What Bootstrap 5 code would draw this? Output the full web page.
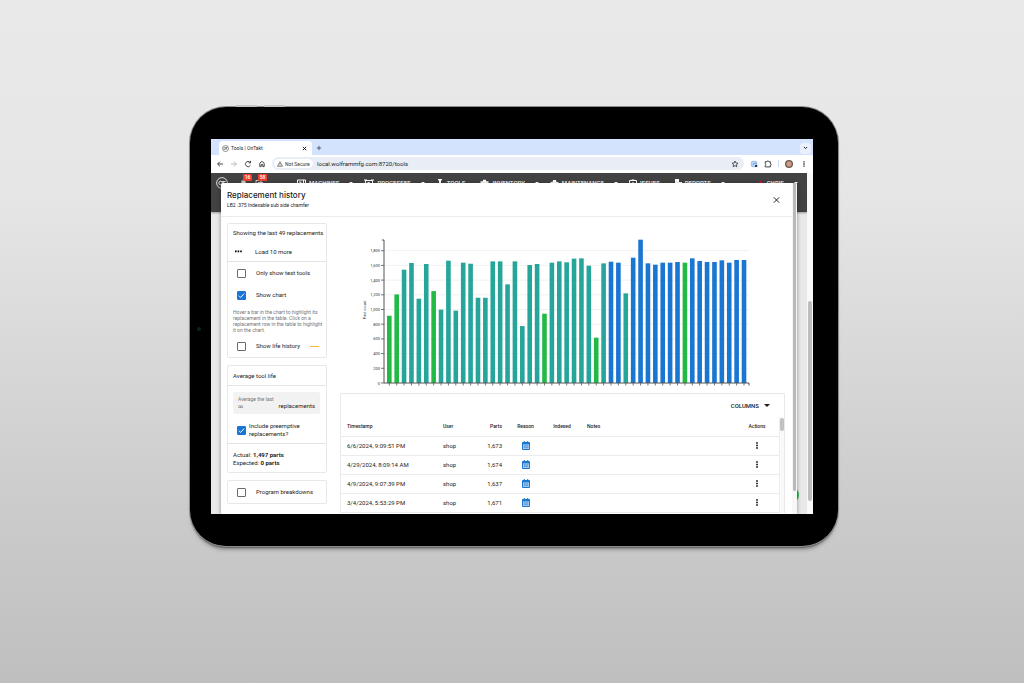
<!DOCTYPE html>
<html lang="en">
<head>
<meta charset="utf-8">
<meta name="viewport" content="width=device-width, initial-scale=1">
<title>Tools | OnTakt</title>
<link href="https://cdn.jsdelivr.net/npm/bootstrap@5.3.0/dist/css/bootstrap.min.css" rel="stylesheet">
<style>
  body { font-family: Roboto, "Liberation Sans", sans-serif; font-size: 6px; line-height: 8px; color: #1d1d1d;
    background: linear-gradient(#e9e9e9 0%, #e6e6e6 28%, #cbcbcb 75%, #bfbfbf 100%); }
  svg { display: block; flex: none; }
  button, .menu-link { font: inherit; color: inherit; background: none; border: 0; padding: 0; text-decoration: none; display: flex; align-items: center; }
  .stage { height: 100vh; padding: 107px 186px 137px 190px; }
  .tablet { min-height: 0; background: #000; border-radius: 36px; padding: 32px 25px 32px 21px; box-shadow: 0 0 0 1px #8c8c8c, 0 2px 1px 0 #666, 0 5px 4px -2px #777; }
  .top-key { top: -2px; width: 21px; height: 2px; background: #c4c4c4; }
  .key-a { left: 46px; } .key-b { left: 74px; }
  .lens { left: 7px; top: 50%; width: 4px; height: 4px; background: #06251c; }
  .display { background: #fff; }

  .tabstrip { height: 16px; background: #d3e3fd; padding: 2px 2px 0 8px; }
  .browser-tab { width: 93px; height: 14px; background: #fff; border-radius: 4px 4px 0 0; padding: 0 5px 0 3px; font-size: 5px; gap: 2px; }
  .tab-menu { width: 11px; height: 11px; background: #eaf1fe; border-radius: 3px; justify-content: center; }
  .toolbar { height: 18px; padding: 0 8px 1px 5px; gap: 6px; color: #333; }
  .omnibox { height: 13px; background: #e9edf6; border-radius: 7px; padding: 0 5px 0 2px; }
  .chip { height: 9px; background: #fff; border-radius: 5px; padding: 0 3px; font-size: 5px; gap: 2px; width: 39px; }
  .omnibox input { border: 0; background: none; outline: 0; padding: 0; height: 10px; color: #222; min-width: 0; }
  .avatar { width: 8px; height: 8px; background: radial-gradient(circle at 50% 50%, #d49a88 0 35%, #6a5a4a 60%, #5d6b4c 100%); }
  .sep { width: 1px; height: 7px; background: #c9dafb; }

  .app { min-height: 0; background: #e9e9e9; }
  .page-track { flex: none; width: 6px; background: #f9f9f9; padding: 128px 1px 0; }
  .page-thumb { height: 200px; background: #bdbdbd; border-radius: 2px; }
  .appbar { height: 39px; background: #424242; color: #fff; padding: 4px 9px 0 5px; font-weight: 500; box-shadow: 0 1px 2px #999; }
  .appbar-row { height: 12px; }
  .alerts { margin-left: 12px; }
  .menu-link { gap: 3px; color: #fff; margin-right: 11px; }
  .menu-link .caret { margin-left: 7px; }
  .caret { width: 0; height: 0; border: 2px solid transparent; border-top-color: currentColor; border-bottom: 0; display: block; }
  .count { top: -5px; left: 3px; min-width: 9px; height: 7px; line-height: 7px; border-radius: 1px; background: #f23c32; font-size: 5px; text-align: center; }
  .main-menu { margin-left: 34px; }
  .fab { right: 14px; bottom: 11px; width: 16px; height: 16px; background: #21ba45; }

  .dialog-panel { left: 10px; right: 16px; top: 10px; bottom: 0; background: #fff; box-shadow: 0 1px 4px #0006; border-radius: 2px 2px 0 0; }
  .fill { flex: 1 1 0; min-width: 0; }
  .dialog-head { height: 34px; border-bottom: 1px solid #ececec; padding: 6px 12px 0 6px; }
  .dialog-head h1 { font: 500 8px/13px Inter, sans-serif; margin: 0; }
  .fine { font-size: 5px; line-height: 6px; }
  .dialog-track { flex: none; width: 5px; background: #f7f7f7; padding: 0 1px; }
  .dialog-thumb { height: 308px; background: #b9b9b9; border-radius: 0 0 2px 2px; }
  .dialog-cols { padding: 6px 7px 0 6px; gap: 13px; }
  .side { width: 100px; gap: 7px; flex: none; }
  .panel { border: 1px solid #e8e8e8; border-radius: 2px; }
  .line { height: 19px; padding: 0 5px; }
  .first-line { height: 18px; }
  .option { height: 22px; padding-left: 9px; gap: 10px; white-space: nowrap; }
  .option-tall { height: 26px; gap: 3px; }
  .more { gap: 13px; }
  .tick { appearance: none; width: 9px; height: 9px; border: 1px solid #6a6a6a; border-radius: 1px; margin: 0; flex: none; }
  .tick:checked { border-color: #1976d2; background: #1976d2 url("data:image/svg+xml,%3Csvg xmlns='http://www.w3.org/2000/svg' viewBox='0 0 8 8'%3E%3Cpath d='M1 4.2 3 6.2 7 1.8' fill='none' stroke='white' stroke-width='1.1'/%3E%3C/svg%3E") center/7px no-repeat; }
  .hint { color: #757575; padding: 3px 2px 2px 5px; margin: 0; }
  .rule { border-top: 1px solid #e3e3e3; }
  .dash { width: 9px; height: 1px; background: #f4b93c; margin: 0 7px 0 auto; }
  .field { background: #f2f2f2; border-radius: 2px; margin: 6px 6px 3px 5px; height: 22px; padding: 4px 5px 0; }
  .field label { color: #757575; }
  .field input { border: 0; background: none; padding: 0; width: 20px; height: 8px; outline: 0; color: #555; font-size: 5px; }
  .totals { padding: 7px 5px 5px; }

  .chart { margin-top: 13px; width: 100%; height: auto; }
  .chart text { font-size: 4px; fill: #333; }
  .records { margin-top: 5px; border-bottom: 0; border-radius: 2px 2px 0 0; }
  .columns-bar { height: 23px; padding-right: 14px; font-weight: 500; }
  .columns-bar .caret { border-width: 3px 3px 0; margin-left: 5px; }
  .history { margin: 0; table-layout: fixed; }
  .history th { font-size: 5px; font-weight: 500; height: 19px; padding: 0; }
  .history td { height: 19px; padding: 0; }
  .history tr { border-bottom: 1px solid #ebebeb; }
  .history th:first-child, .history td:first-child { padding-left: 6px; }
  .history .notes { padding-left: 12px; }
  .w-time { width: 102px; } .w-user { width: 35px; } .w-parts { width: 24px; } .w-reason { width: 47px; } .w-index { width: 26px; } .w-act { width: 44px; }
  .table-track { flex: none; width: 5px; background: #f9f9f9; border-left: 1px solid #eee; padding-top: 1px; }
  .table-thumb { height: 13px; background: #c1c1c1; border-radius: 2px; }
</style>
</head>
<body class="overflow-hidden">
<svg width="0" height="0" class="position-absolute">
  <symbol id="cal" viewBox="0 0 8 9"><path fill="#1976d2" d="M1 1h.8V0h1v1h2.4V0h1v1H7q1 0 1 1v6q0 1-1 1H1Q0 9 0 8V2q0-1 1-1Z"/><path fill="#b4d0f0" d="M1 3.4h6V8H1Z"/><path fill="#4c93dd" d="M1.8 4.2h4.4v3H1.8Z"/><path stroke="#b4d0f0" stroke-width=".4" d="M3.2 4v3.4M4.9 4v3.4M1.5 5.7h5"/></symbol>
  <symbol id="dots" viewBox="0 0 2 7"><path d="M.2.2h1.6v1.6H.2ZM.2 2.7h1.6v1.6H.2ZM.2 5.2h1.6v1.6H.2Z"/></symbol>
</svg>
<main class="stage d-flex flex-column">
  <div class="tablet position-relative flex-grow-1 d-flex flex-column">
    <span class="top-key key-a position-absolute"></span><span class="top-key key-b position-absolute"></span>
    <span class="lens position-absolute rounded-circle"></span>
    <div class="display flex-grow-1 d-flex flex-column overflow-hidden">

      <div class="tabstrip d-flex align-items-center">
        <div class="browser-tab d-flex align-items-center">
          <svg width="7" height="7" viewBox="0 0 14 14" fill="none" stroke="#555" stroke-width="1.3"><circle cx="7" cy="7" r="6"/><circle cx="5.5" cy="7" r="2"/><path d="M7 5h4M9 5v4"/></svg>
          <span>Tools | OnTakt</span>
          <button class="ms-auto" aria-label="Close tab"><svg width="5" height="5" viewBox="0 0 5 5" stroke="#222"><path d="M.8.8l3.4 3.4M4.2.8.8 4.2"/></svg></button>
        </div>
        <button class="ms-1" aria-label="New tab"><svg width="6" height="6" viewBox="0 0 6 6" stroke="#444" stroke-width=".8"><path d="M3 .8v4.4M.8 3h4.4"/></svg></button>
        <button class="tab-menu ms-auto" aria-label="Search tabs"><svg width="5" height="4" viewBox="0 0 5 4" fill="none" stroke="#222"><path d="M.9 1l1.6 1.6L4.1 1"/></svg></button>
      </div>

      <div class="toolbar d-flex align-items-center">
        <button aria-label="Back"><svg width="8" height="8" viewBox="0 0 8 8" fill="none" stroke="#333" stroke-width=".9"><path d="M7 4H1.7M4 1.6 1.6 4 4 6.4"/></svg></button>
        <button aria-label="Forward"><svg width="8" height="8" viewBox="0 0 8 8" fill="none" stroke="#aaa" stroke-width=".8"><path d="M1 4h5.3M4 1.6 6.4 4 4 6.4"/></svg></button>
        <button aria-label="Reload"><svg width="8" height="8" viewBox="0 0 8 8" fill="none" stroke="#333" stroke-width=".9"><path d="M6.4 5.2A2.6 2.6 0 1 1 6 2.3M6.5.9v2H4.6"/></svg></button>
        <button aria-label="Home"><svg width="8" height="8" viewBox="0 0 8 8" fill="none" stroke="#333" stroke-width=".9"><path d="M1.8 3.2 4 1.4l2.2 1.8v3.4H4.8V4.6H3.2v2H1.8Z"/></svg></button>
        <div class="omnibox flex-grow-1 d-flex align-items-center">
          <span class="chip d-flex align-items-center me-1"><svg width="6" height="6" viewBox="0 0 6 6" fill="none" stroke="#333" stroke-width=".6"><path d="M3 .8 5.5 5.3H.5ZM3 2.4v1.4M3 4.2v.6"/></svg><span class="text-nowrap">Not Secure</span></span>
          <input class="flex-grow-1" type="text" aria-label="Address" value="local.wolframmfg.com:8720/tools">
          <button aria-label="Bookmark"><svg width="8" height="8" viewBox="0 0 8 8" fill="none" stroke="#333" stroke-width=".8"><path d="M4 1l.9 2 2.1.2-1.6 1.4.5 2.1L4 5.6 2.1 6.7l.5-2.1L1 3.2 3.1 3Z"/></svg></button>
        </div>
        <button aria-label="Extension"><svg width="8" height="8" viewBox="0 0 8 8"><circle cx="4" cy="4" r="3.2" fill="#7fb0ec"/><path d="M5.6 2.8a2 2 0 1 0 .2 2H4.2" fill="none" stroke="#fff" stroke-width=".8"/><rect x="5" y="5" width="2.2" height="2" fill="#334"/></svg></button>
        <button aria-label="Extensions"><svg width="8" height="8" viewBox="0 0 8 8" fill="none" stroke="#333" stroke-width=".9"><path d="M1.2 1.8H3a.8.8 0 0 1 1.8 0h1.6v1.8a.8.8 0 0 1 0 1.6v1.7H1.2V5.2a.9.9 0 0 0 0-1.7Z"/></svg></button>
        <span class="sep"></span>
        <span class="avatar rounded-circle"></span>
        <button class="ps-1" aria-label="Browser menu"><svg width="2" height="6" fill="#333"><use href="#dots"/></svg></button>
      </div>

      <div class="app flex-grow-1 position-relative d-flex overflow-hidden">
        <div class="flex-grow-1">
          <nav class="appbar">
            <div class="appbar-row d-flex align-items-center">
              <svg width="12" height="12" viewBox="0 0 12 12" fill="none" stroke="#fff" stroke-width=".8"><circle cx="6" cy="6" r="5.4"/><circle cx="4.6" cy="6" r="1.8"/><path d="M6 4.5h3.6M7.7 4.5V8"/></svg>
              <button class="alerts position-relative" aria-label="Alerts"><svg width="7" height="8" viewBox="0 0 7 8" fill="#ccc"><path d="M3.5 1a2.3 2.3 0 0 0-2.3 2.3V5.5L.4 6.6h6.2l-.8-1.1V3.3A2.3 2.3 0 0 0 3.5 1Z"/></svg><span class="count position-absolute">16</span></button>
              <button class="position-relative ms-2" aria-label="Messages"><svg width="8" height="8" viewBox="0 0 8 8" fill="none" stroke="#ccc"><path d="M1 1.5h5v5H1ZM3 3.5h5"/></svg><span class="count position-absolute">58</span></button>
              <div class="main-menu d-flex align-items-center flex-grow-1">
                <a class="menu-link" href="#"><svg width="9" height="9" viewBox="0 0 9 9" fill="none" stroke="#fff"><path d="M.5 1h8v7h-8ZM2 3h2v3M6.5 1v4"/></svg>MACHINES<i class="caret"></i></a>
                <a class="menu-link" href="#"><svg width="10" height="9" viewBox="0 0 10 9" fill="none" stroke="#fff"><path d="M1.5 1.5h7v6h-7ZM0 1h3M7 1h3M3.5 3.5h2v3"/></svg>PROCESSES<i class="caret"></i></a>
                <a class="menu-link" href="#"><svg width="8" height="9" viewBox="0 0 8 9" fill="#fff"><path d="M2 0h4v1.3H5V6h1L4 9 2 6h1V1.3H2Z"/></svg>TOOLS</a>
                <a class="menu-link ms-1" href="#"><svg width="9" height="9" viewBox="0 0 9 9" fill="#fff"><path d="M3 .8h3v1.4h2.5V8H.5V2.2H3Z"/></svg>INVENTORY<i class="caret"></i></a>
                <a class="menu-link" href="#"><svg width="9" height="9" viewBox="0 0 9 9" fill="#fff"><path d="M.5 5V3.2L3 2.6V1h3v1.6l2.5.6V8h-8Z"/></svg>MAINTENANCE<i class="caret"></i></a>
                <a class="menu-link" href="#"><svg width="8" height="9" viewBox="0 0 8 9" fill="none" stroke="#fff"><path d="M.5 1.5h7v7h-7ZM2.5 1h3M4 3v3"/></svg>ISSUES</a>
                <a class="menu-link ms-1" href="#"><svg width="7" height="9" viewBox="0 0 7 9" fill="#fff"><path d="M0 0h4v3h3v6H0Z"/></svg>REPORTS<i class="caret"></i></a>
                <a class="menu-link ms-auto me-0" href="#"><svg width="7" height="9" viewBox="0 0 7 9" fill="#e01020"><circle cx="3.5" cy="3.4" r="1.7"/></svg>CHRIS<i class="caret"></i></a>
              </div>
            </div>
          </nav>
          <span class="fab position-absolute rounded-circle"></span>
        </div>
        <div class="page-track"><div class="page-thumb"></div></div>

        <section class="dialog-panel position-absolute d-flex overflow-hidden" role="dialog" aria-labelledby="dlg-title">
          <div class="fill">
            <header class="dialog-head d-flex justify-content-between">
              <div><h1 id="dlg-title">Replacement history</h1><div class="fine">LB2 .375 Indexable sub side chamfer</div></div>
              <button aria-label="Close" class="align-self-start mt-1"><svg width="7" height="12" viewBox="0 0 7 12" stroke="#222"><path d="M.8 4.3l5.4 5.4M6.2 4.3.8 9.7"/></svg></button>
            </header>
            <div class="dialog-cols d-flex">
              <aside class="side d-flex flex-column">
                <div class="panel">
                  <div class="line first-line d-flex align-items-center text-nowrap">Showing the last 49 replacements</div>
                  <button class="line more w-100"><svg width="9" height="3" viewBox="0 0 9 3"><path d="M2 .6h1.6v1.6H2ZM4.6.6h1.6v1.6H4.6ZM7.2.6h1.6v1.6H7.2Z"/></svg><span>Load 10 more</span></button>
                  <div class="rule"></div>
                  <label class="option d-flex align-items-center"><input class="tick" type="checkbox">Only show test tools</label>
                  <label class="option d-flex align-items-center"><input class="tick" type="checkbox" checked>Show chart</label>
                  <p class="hint fine">Hover a bar in the chart to highlight its replacement in the table. Click on a replacement row in the table to highlight it on the chart.</p>
                  <label class="option d-flex align-items-center"><input class="tick" type="checkbox">Show life history<span class="dash"></span></label>
                </div>
                <div class="panel">
                  <div class="line d-flex align-items-center">Average tool life</div>
                  <div class="rule">
                    <div class="field"><label class="fine d-block" for="last-n">Average the last</label>
                      <div class="d-flex justify-content-between"><input id="last-n" type="text" value="∞"><span>replacements</span></div></div>
                    <label class="option option-tall d-flex align-items-center"><input class="tick" type="checkbox" checked><span>Include preemptive<br>replacements?</span></label>
                  </div>
                  <div class="rule totals">Actual: <strong>1,497 parts</strong><br>Expected: <strong>0 parts</strong></div>
                </div>
                <div class="panel"><label class="option d-flex align-items-center"><input class="tick" type="checkbox">Program breakdowns</label></div>
              </aside>

              <div class="fill">
                <svg id="chart" class="chart" viewBox="0 0 445 152" role="img" aria-label="Part count per replacement"></svg>
                <div class="panel records">
                  <div class="columns-bar d-flex align-items-center justify-content-end"><button>COLUMNS<i class="caret"></i></button></div>
                  <div class="d-flex">
                    <table class="history fill">
                      <thead><tr><th class="w-time">Timestamp</th><th class="w-user">User</th><th class="w-parts text-end">Parts</th><th class="w-reason text-center">Reason</th><th class="w-index text-center">Indexed</th><th class="notes">Notes</th><th class="w-act text-center">Actions</th></tr></thead>
                      <tbody id="rows"></tbody>
                    </table>
                    <div class="table-track"><div class="table-thumb"></div></div>
                  </div>
                </div>
              </div>
            </div>
          </div>
          <div class="dialog-track"><div class="dialog-thumb"></div></div>
        </section>
      </div>
    </div>
  </div>
</main>
<script src="https://cdn.jsdelivr.net/npm/bootstrap@5.3.0/dist/js/bootstrap.bundle.min.js"></script>
<script>
  // Part counts, oldest first; the letter picks the bar colour
  const counts = "g915 g1205 t1542 t1633 t1147 t1619 g1250 t998 t1664 t984 t1637 t1623 t1160 t1160 t1655 t1655 t1342 t1655 t775 t1605 t1619 g943 t1637 t1655 t1642 t1692 t1696 t1596 g617 t1628 b1650 b1637 t1220 b1705 b1950 b1628 b1610 b1637 b1637 b1646 g1637 b1696 b1660 b1646 b1646 b1669 b1637 b1674 b1673".split(" ");
  const fill = { g: "#21ba45", t: "#26a69a", b: "#1976d2" };
  const left = 44, right = 409, base = 147, unit = 0.0735, pitch = 7.39;
  let out = "";
  for (let v = 0; v <= 1800; v += 200) {
    const y = base - v * unit;
    if (v) out += `<path d="M${left} ${y}H${right}" stroke="#eee" stroke-width=".8"/>`;
    out += `<path d="M${left - 3} ${y}H${left}" stroke="#555" stroke-width=".8"/><text x="${left - 4}" y="${y + 1.5}" text-anchor="end">${v.toLocaleString("en-US")}</text>`;
  }
  counts.forEach((c, i) => {
    const x = 49.3 + i * pitch, h = c.slice(1) * unit;
    out += `<rect x="${x - 2.3}" y="${base - h}" width="4.6" height="${h}" fill="${fill[c[0]]}"/><path d="M${x} ${base}v2.5" stroke="#555" stroke-width=".8"/>`;
  });
  out += `<path d="M${left - 2} 4H${left}V${base}H${right}v2.5" fill="none" stroke="#555"/><text transform="translate(26 74) rotate(-90)" text-anchor="middle">Part count</text>`;
  document.getElementById("chart").innerHTML = out;

  const rows = [["6/6/2024, 9:09:51 PM", "1,673"], ["4/29/2024, 8:09:14 AM", "1,674"], ["4/9/2024, 9:07:39 PM", "1,637"], ["3/4/2024, 5:53:29 PM", "1,671"]];
  document.getElementById("rows").innerHTML = rows.map(([t, n]) =>
    `<tr><td>${t}</td><td>shop</td><td class="text-end">${n}</td><td><svg class="mx-auto" width="8" height="9"><use href="#cal"/></svg></td><td></td><td></td><td><button class="mx-auto" aria-label="Row actions"><svg width="2" height="7"><use href="#dots"/></svg></button></td></tr>`).join("");
</script>
</body>
</html>
